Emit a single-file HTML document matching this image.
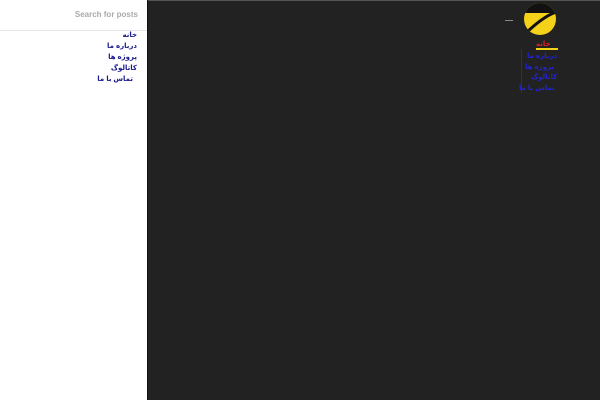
<!DOCTYPE html>
<html><head><meta charset="utf-8"><style>
body{margin:0;width:600px;height:400px;overflow:hidden;background:#222;font-family:"Liberation Sans","DejaVu Sans",sans-serif;position:relative}
.side{position:absolute;left:0;top:0;width:147px;height:400px;background:#fff;border-right:1px solid #111}
.search{position:absolute;right:9px;top:10px;font-size:8px;font-weight:bold;color:#aaa}
.line{position:absolute;left:0;top:30px;width:147px;border-top:1px solid #e6e6e6}
.m{position:absolute;font-size:7px;font-weight:bold;color:#1a1a8a;direction:rtl;white-space:nowrap}
.r{position:absolute;font-size:7px;font-weight:bold;color:#2323d0;direction:rtl;white-space:nowrap}
.top{position:absolute;left:147px;top:0;width:453px;height:1px;background:#555}
</style></head><body>
<div class="top"></div>
<div class="side">
<div class="search">Search for posts</div>
<div class="line"></div>
<div class="m" style="right:10px;top:31px">خانه</div>
<div class="m" style="right:10px;top:42px">درباره ما</div>
<div class="m" style="right:10px;top:53px">پروژه ها</div>
<div class="m" style="right:10px;top:64px">کاتالوگ</div>
<div class="m" style="right:14px;top:75px">تماس با ما</div>
</div>
<svg style="position:absolute;left:520px;top:1px" width="40" height="36" viewBox="0 0 40 36">
<clipPath id="c"><circle cx="20" cy="18" r="16"/></clipPath>
<circle cx="20" cy="18" r="16" fill="#f5d21a"/>
<rect x="0" y="0" width="40" height="12" fill="#111" clip-path="url(#c)"/>
<path d="M36 11 Q22 16 4 34" stroke="#111" stroke-width="3" fill="none" clip-path="url(#c)"/>
</svg>
<div style="position:absolute;left:505px;top:20px;width:8px;height:1px;background:#888"></div>
<div style="position:absolute;left:536px;top:40px;font-size:7px;font-weight:bold;color:#d22">خانه</div>
<div style="position:absolute;left:536px;top:48px;width:22px;height:2px;background:#f5d21a"></div>
<div style="position:absolute;left:521px;top:49px;width:1px;height:44px;background:#333"></div>
<div class="r" style="left:527px;top:52px">درباره ما</div>
<div class="r" style="left:525px;top:63px">پروژه ها</div>
<div class="r" style="left:531px;top:73px">کاتالوگ</div>
<div class="r" style="left:519px;top:84px">تماس با ما</div>
</body></html>
